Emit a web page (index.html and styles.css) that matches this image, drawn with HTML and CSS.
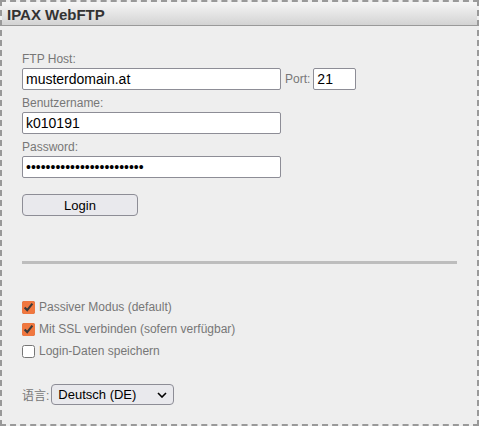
FILE: index.html
```html
<!DOCTYPE html>
<html lang="de">

<head>
    <meta charset="UTF-8">
    <meta name="viewport" content="width=device-width, initial-scale=1.0">
    <title>IPAX WebFTP</title>
    <link rel="stylesheet" href="styles.css">
</head>

<body>
    <div class="ftp-box">
        <div class="ftp-header">IPAX WebFTP</div>

        <div class="ftp-content">
            <label class="field-label" for="host">FTP Host:</label>
            <div class="host-row">
                <input type="text" id="host" class="text-input wide" value="musterdomain.at">
                <label class="port-label" for="port">Port:</label>
                <input type="text" id="port" class="text-input port" value="21">
            </div>

            <label class="field-label" for="user">Benutzername:</label>
            <input type="text" id="user" class="text-input wide" value="k010191">

            <label class="field-label" for="pass">Password:</label>
            <input type="password" id="pass" class="text-input wide" value="abcdefghijklmnopqrstuvwx">

            <button class="login-btn">Login</button>

            <hr class="divider">

            <div class="options">
                <label class="option"><input type="checkbox" checked> Passiver Modus (default)</label>
                <label class="option"><input type="checkbox" checked> Mit SSL verbinden (sofern verfügbar)</label>
                <label class="option"><input type="checkbox"> Login-Daten speichern</label>
            </div>

            <div class="lang-row">
                <span class="lang-label">语言:</span>
                <div class="select-wrap">
                    <select class="lang-select">
                        <option>Deutsch (DE)</option>
                        <option>English (EN)</option>
                    </select>
                    <svg class="chevron" width="10" height="6" viewBox="0 0 10 6">
                        <path d="M1 1l4 4 4-4" fill="none" stroke="#000" stroke-width="1.6"/>
                    </svg>
                </div>
            </div>
        </div>
    </div>
</body>

</html>
```

FILE: styles.css
```css
* {
    margin: 0;
    padding: 0;
    box-sizing: border-box;
    font-family: "Liberation Sans", Arial, sans-serif;
}

body {
    background-color: #fff;
}

.ftp-box {
    width: 479px;
    height: 426px;
    border: 2px dashed #999;
    background-color: #eeeeee;
}

.ftp-header {
    height: 24px;
    padding-left: 5px;
    padding-top: 4px;
    font-size: 15px;
    font-weight: bold;
    color: #333;
    background: linear-gradient(#f6f6f6, #d3d3d3);
    border-bottom: 1px solid #999;
}

.ftp-content {
    padding: 26px 0 0 20px;
}

.field-label {
    display: block;
    font-size: 12px;
    line-height: 14px;
    color: #777;
    margin-bottom: 2px;
}

.host-row {
    display: flex;
    align-items: center;
    margin-bottom: 6px;
}

.text-input {
    display: block;
    height: 22px;
    padding: 0 3px;
    border: 1px solid #8d8d96;
    border-radius: 2px;
    background-color: #fff;
    font-size: 14px;
    color: #000;
    margin-bottom: 6px;
}

.host-row .text-input {
    margin-bottom: 0;
}

.wide {
    width: 259px;
}

.port {
    width: 43px;
}

.port-label {
    font-size: 12px;
    color: #777;
    margin: 0 3px 0 4px;
}

input[type="password"] {
    font-size: 14px;
}

.login-btn {
    display: block;
    width: 116px;
    height: 22px;
    margin-top: 16px;
    border: 1px solid #8d8d96;
    border-radius: 4px;
    background-color: #e9e9ed;
    font-size: 13px;
    color: #000;
}

.divider {
    width: 435px;
    height: 3px;
    margin-top: 45px;
    border: none;
    background-color: #bdbdbd;
}

.options {
    margin-top: 32px;
}

.option {
    display: flex;
    align-items: center;
    height: 22px;
    font-size: 12px;
    color: #777;
}

.option input {
    width: 13px;
    height: 13px;
    margin: 0 4px 0 0;
    accent-color: #f0773f;
}

.lang-row {
    display: flex;
    align-items: center;
    margin-top: 22px;
}

.lang-label {
    font-size: 12px;
    color: #777;
    margin-right: 2px;
    font-family: "Liberation Sans", "Noto Sans CJK SC", sans-serif;
}

.select-wrap {
    position: relative;
}

.lang-select {
    display: block;
    width: 123px;
    height: 21px;
    padding-left: 6px;
    appearance: none;
    border: 1px solid #8d8d96;
    border-radius: 4px;
    background-color: #e9e9ed;
    font-size: 13px;
    color: #000;
}

.chevron {
    position: absolute;
    right: 7px;
    top: 8px;
    pointer-events: none;
}
```
